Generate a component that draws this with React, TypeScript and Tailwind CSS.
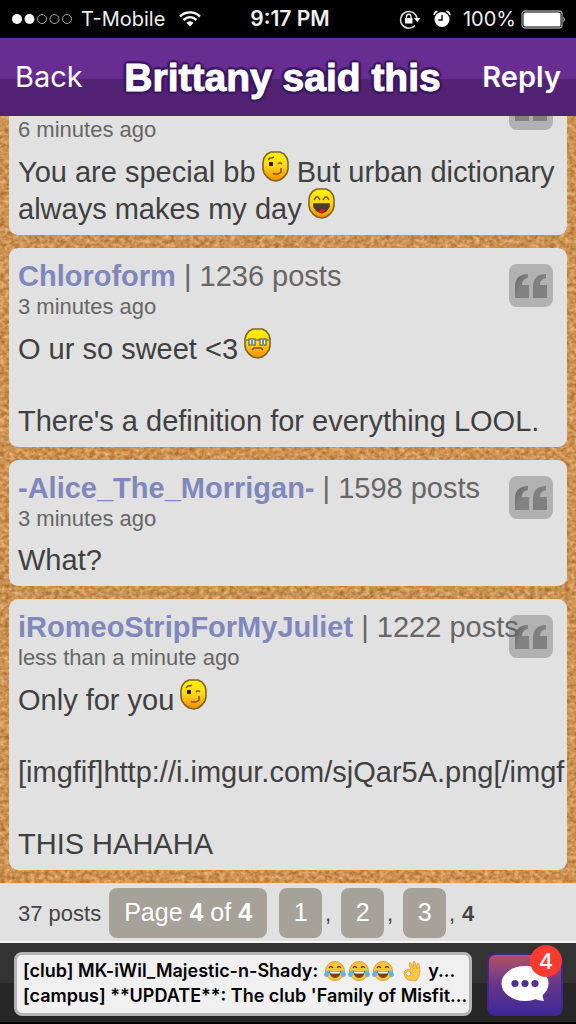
import type { ReactNode } from 'react'

type Mood = 'wink' | 'laugh' | 'glasses'

interface Post {
  id: number
  author?: string
  count?: number
  time: string
  lines: ReactNode[]
}

function Smiley({ mood }: { mood: Mood }) {
  return (
    <svg viewBox="0 0 27 31" role="img" aria-label={mood} className="inline-block align-baseline w-[27px] h-[31px] -mt-[2px] -ml-[2px]">
      <defs>
        <linearGradient id={`face-${mood}`} x1="0" y1="0" x2="0" y2="1">
          <stop offset="0" stopColor="#fff200" />
          <stop offset="0.45" stopColor="#ffd81a" />
          <stop offset="1" stopColor="#f98a00" />
        </linearGradient>
      </defs>
      <path
        d="M9 1H18L22 3L25 7L26 11V18L25 22L22 26L18 29L14 30L9 29L5 26L2 22L1 18V11L2 7L5 3Z"
        fill={`url(#face-${mood})`}
        stroke="#7d6726"
        strokeWidth="1.600"
        strokeLinejoin="round"
      />
      {mood === 'wink' && (
        <g fill="none" stroke="#7a5c10" strokeWidth="1.500">
          <path d="M6 9L8 7H10L12 6" />
          <rect x="7" y="11" width="4" height="4" fill="#2b2208" stroke="none" />
          <path d="M16 13L17 12H19L20 13" />
          <path d="M11 22L12 23H16L19 21V17" />
        </g>
      )}
      {mood === 'laugh' && (
        <g fill="none" stroke="#7a5c10" strokeWidth="1.500">
          <path d="M6 12L8 9H10L12 12M15 12L17 9H19L21 12" />
          <path d="M6 16H21V19L18 23L14 25L9 23L6 19Z" fill="#403d3b" stroke="#554015" />
          <path d="M11 23L13 21H15L17 23L15 25H12Z" fill="#e01414" stroke="none" />
        </g>
      )}
      {mood === 'glasses' && (
        <g fill="none" stroke="#7b7558" strokeWidth="1.500">
          <path d="M2 12H5M11 12H16M22 12H25" />
          <rect x="5" y="11" width="6" height="6" fill="#e9f5f4" />
          <rect x="16" y="11" width="6" height="6" fill="#e9f5f4" />
          <path d="M8 12V16M19 12V16" stroke="#5095b5" strokeWidth="2" />
          <path d="M8 22L10 20H17L19 22" stroke="#7a5310" />
        </g>
      )}
    </svg>
  )
}

const posts: Post[] = [
  {
    id: 1,
    time: '6 minutes ago',
    lines: [
      <>You are special bb <Smiley mood="wink" /> But urban dictionary</>,
      <>always makes my day <Smiley mood="laugh" /></>,
    ],
  },
  {
    id: 2,
    author: 'Chloroform',
    count: 1236,
    time: '3 minutes ago',
    lines: [<>O ur so sweet &lt;3 <Smiley mood="glasses" /></>, '', "There's a definition for everything LOOL."],
  },
  { id: 3, author: '-Alice_The_Morrigan-', count: 1598, time: '3 minutes ago', lines: ['What?'] },
  {
    id: 4,
    author: 'iRomeoStripForMyJuliet',
    count: 1222,
    time: 'less than a minute ago',
    lines: [
      <>Only for you <Smiley mood="wink" /></>,
      '',
      '[imgfif]http://i.imgur.com/sjQar5A.png[/imgf',
      '',
      'THIS HAHAHA',
    ],
  },
]

function StatusBar() {
  return (
    <div className="grid grid-cols-[1fr_auto_1fr] items-center h-[38px] shrink-0 px-3 bg-black text-[#f0f0f0] text-[20px] leading-6 font-[Inter,sans-serif]">
      <div className="flex items-center">
        <svg viewBox="0 0 62 12" className="w-[62px] h-3 mr-[7px]" aria-hidden="true">
          <circle cx="5" cy="6" r="5" fill="#fff" />
          <circle cx="17.500" cy="6" r="5" fill="#fff" />
          <g fill="none" stroke="#aaa">
            <circle cx="30" cy="6" r="4.500" />
            <circle cx="42.500" cy="6" r="4.500" />
            <circle cx="55" cy="6" r="4.500" />
          </g>
        </svg>
        T-Mobile
        <svg viewBox="0 0 22 16" className="w-[22px] h-4 ml-[14px]" aria-hidden="true">
          <path d="M1 5.500C6.500 0 15.500 0 21 5.500" fill="none" stroke="#fff" strokeWidth="2.400" />
          <path d="M4.500 9C8.500 5.300 13.500 5.300 17.500 9" fill="none" stroke="#fff" strokeWidth="2.400" />
          <path d="M7.500 11.800Q11 8.800 14.500 11.800L11 15.500Z" fill="#fff" />
        </svg>
      </div>
      <div className="font-semibold text-[21px] pl-1">9:17 PM</div>
      <div className="flex items-center justify-end">
        <svg viewBox="0 0 22 20" className="w-[22px] h-5 mr-3" aria-hidden="true">
          <path d="M16 16.500A8.300 8.300 0 1 1 18 9" fill="none" stroke="#ddd" strokeWidth="1.500" />
          <path d="M15 9H21.500L18.200 13Z" fill="#fff" />
          <rect x="6" y="9" width="7.500" height="5.500" fill="#fff" />
          <path d="M7.500 9V7.500A2 2 0 0 1 12 7.500V9" fill="none" stroke="#fff" strokeWidth="1.300" />
        </svg>
        <svg viewBox="0 0 18 18" className="w-[18px] h-[18px] mr-3" aria-hidden="true">
          <circle cx="9" cy="9.500" r="7.500" fill="#fff" />
          <path d="M1 5Q1.500 2 4.500 1.200M17 5Q16.500 2 13.500 1.200" fill="none" stroke="#fff" strokeWidth="1.500" />
          <path d="M9 5V10H5.500" fill="none" stroke="#000" strokeWidth="1.400" />
        </svg>
        100%
        <svg viewBox="0 0 45 19" className="w-[45px] h-[19px] ml-[5px] -mr-[2px]" aria-hidden="true">
          <rect x="1" y="1" width="40" height="17" rx="3" fill="none" stroke="#999" strokeWidth="1.300" />
          <rect x="2.500" y="2.500" width="37" height="14" rx="1.500" fill="#fff" />
          <path d="M42.500 6.500Q45 9.500 42.500 12.500Z" fill="#ddd" />
        </svg>
      </div>
    </div>
  )
}

function CorkBoard() {
  return (
    <svg className="absolute inset-0 w-full h-full" aria-hidden="true">
      <filter id="cork" x="0" y="0" width="100%" height="100%" colorInterpolationFilters="sRGB">
        <feTurbulence type="fractalNoise" baseFrequency="0.2 0.25" numOctaves="3" seed="8" />
        <feColorMatrix values="0.36 0 0 0 0.62  0.44 0 0 0 0.35  0.46 0.05 0 0 0.07  0 0 0 0 1" />
      </filter>
      <rect width="100%" height="100%" filter="url(#cork)" />
    </svg>
  )
}

function PostCard({ post }: { post: Post }) {
  return (
    <article className="relative shrink-0 rounded-[9px] bg-[#e1e1e1] px-[9px] pt-[11px] pb-2">
      <button
        aria-label="Quote"
        className="absolute top-4 right-[14px] w-11 h-[43px] rounded-lg bg-[#b1b1b1] flex items-center justify-center"
      >
        <svg viewBox="0 0 34 26" className="w-[34px] h-[26px]" aria-hidden="true">
          <defs>
            <linearGradient id="quote" x1="0" y1="0" x2="1" y2="1">
              <stop offset="0" stopColor="#606060" />
              <stop offset="0.500" stopColor="#828282" />
            </linearGradient>
          </defs>
          <path d="M1 25V14C1 6 5 1 14 1V5C10 6 8 8 8 12H15V25Z" fill="url(#quote)" />
          <path d="M19 25V14C19 6 23 1 32 1V5C28 6 26 8 26 12H33V25Z" fill="#808080" />
        </svg>
      </button>
      <h2 className="relative h-[35px] text-[29px] leading-[34px] text-[#666] whitespace-nowrap pointer-events-none">
        {post.author && (
          <>
            <a href="#profile" className="font-bold text-[#8088bb] pointer-events-auto">{post.author}</a> | {post.count} posts
          </>
        )}
      </h2>
      <p className="text-[22px] leading-[26px] text-[#666]">{post.time}</p>
      <div className="mt-[10px] text-[29px] leading-9 text-[#404040] whitespace-nowrap">
        {post.lines.map((line, i) => (
          <p key={i} className="min-h-9">{line}</p>
        ))}
      </div>
    </article>
  )
}

function JoyFace() {
  return (
    <svg viewBox="0 0 22 22" role="img" aria-label="joy" className="w-[22px] h-[22px] shrink-0 mr-[2px]">
      <circle cx="11" cy="11" r="9.500" fill="#fcc63c" stroke="#e59c27" />
      <path d="M5 8Q7 5 9 8M13 8Q15 5 17 8" fill="none" stroke="#6b3d13" strokeWidth="1.300" />
      <path d="M5 11H17Q16 18 11 18T5 11Z" fill="#78401b" />
      <path d="M6 11.500H16L15.500 13.500H6.500Z" fill="#fff" />
      <path d="M5.500 10Q0 11 0 15Q1 18 4 16.500Q6 14 5.500 10ZM16.500 10Q22 11 22 15Q21 18 18 16.500Q16 14 16.500 10Z" fill="#58b8ec" />
    </svg>
  )
}

function OkHand() {
  return (
    <svg viewBox="0 0 20 22" role="img" aria-label="ok hand" className="w-5 h-[22px] shrink-0 ml-[6px] mr-[6px]">
      <path
        d="M6 20Q3 18 2 14Q2 10 6 9L9 10L7 4Q7 2 9 3L12 9L11 2Q12 0 13 2L15 9L15 4Q17 2 17 4L18 11Q18 17 14 21Z"
        fill="#fcc54c"
        stroke="#e6a12d"
        strokeWidth="0.800"
      />
      <circle cx="6.500" cy="13.500" r="2.500" fill="#f0f0f0" stroke="#e6a12d" />
    </svg>
  )
}

function Pager() {
  return (
    <nav aria-label="Pages" className="flex items-center h-[60px] shrink-0 pl-[18px] pt-[2px] bg-[#e1e1e1] border-b-2 border-[#f4f4f4] text-[22px] text-[#444]">
      <span>37 posts</span>
      <button className="h-[50px] ml-2 px-[15px] rounded-lg bg-[#a6a199] text-white text-[25px]">
        Page <b>4</b> of <b>4</b>
      </button>
      {[1, 2, 3].map((n) => (
        <span key={n} className="flex items-center">
          <button className="w-[43px] h-[50px] ml-3 rounded-lg bg-[#a6a199] text-white text-[25px]">{n}</button>
          <span className="w-1 ml-[3px]">,</span>
        </span>
      ))}
      <b className="ml-[9px]">4</b>
    </nav>
  )
}

function ChatBar() {
  return (
    <footer className="flex items-center gap-[15px] h-[81px] shrink-0 pl-[14px] pr-[13px] pt-[3px] bg-linear-to-b from-[#333] from-50% to-[#272727] to-50% border-b-2 border-black">
      <div className="flex-1 min-w-0 h-16 px-[6px] pt-[3px] rounded-lg border-[3px] border-[#b4b4b4] bg-[#f0f0f0] text-black font-[Inter,sans-serif] font-semibold text-[18px] leading-[25px] whitespace-nowrap">
        <div className="flex items-center">
          <span className="mr-[6px]">[club] MK-iWil_Majestic-n-Shady:</span>
          <JoyFace />
          <JoyFace />
          <JoyFace />
          <OkHand />
          <span>y...</span>
        </div>
        <div>[campus] **UPDATE**: The club 'Family of Misfit...</div>
      </div>
      <button
        aria-label="Chat, 4 new"
        className="relative w-[76px] h-[63px] shrink-0 rounded-lg border-2 border-[#44258a] bg-linear-to-b from-[#b74d61] via-[#65358a] to-[#3d2897] flex items-center justify-center"
      >
        <svg viewBox="0 0 48 36" className="w-12 h-9" aria-hidden="true">
          <ellipse cx="24" cy="17.500" rx="23.500" ry="17.500" fill="#fff" />
          <path d="M32 32Q37 35 43 35Q41 31 42 26Z" fill="#fff" />
          <g fill="#53328d">
            <circle cx="14" cy="17.500" r="3.600" />
            <circle cx="24" cy="17.500" r="3.600" />
            <circle cx="34" cy="17.500" r="3.600" />
          </g>
        </svg>
        <span className="absolute -top-[10px] -right-[1px] w-8 h-8 rounded-full bg-[#fc3a30] text-white text-[22px] leading-8 font-medium font-[Inter,sans-serif] text-center">
          4
        </span>
      </button>
    </footer>
  )
}

export default function App() {
  return (
    <div className="flex flex-col h-screen overflow-hidden font-['Liberation_Sans',Arial,sans-serif]">
      <StatusBar />
      <header className="flex items-center justify-between h-[78px] shrink-0 px-[15px] bg-linear-to-b from-[#682d91] from-52% to-[#522372] to-52% text-white">
        <button className="pb-[1px] text-[29px] font-[Inter,sans-serif]">Back</button>
        <h1 className="pt-[1px] text-[39px] leading-none font-bold whitespace-nowrap [-webkit-text-stroke:1px_white] [text-shadow:3px_0_1px_#3b1660,-3px_0_1px_#3b1660,0_3px_1px_#3b1660,0_-3px_1px_#3b1660,2px_2px_1px_#3b1660,-2px_-2px_1px_#3b1660,2px_-2px_1px_#3b1660,-2px_2px_1px_#3b1660]">
          Brittany said this
        </h1>
        <button className="pb-[1px] text-[29px] font-semibold font-[Inter,sans-serif]">Reply</button>
      </header>
      <main className="relative flex-1 min-h-0 overflow-hidden bg-[#cc8d4b]">
        <CorkBoard />
        <div className="relative h-full flex flex-col justify-end gap-[13px] px-[9px] pb-[13px]">
          {posts.map((post) => (
            <PostCard key={post.id} post={post} />
          ))}
        </div>
      </main>
      <Pager />
      <ChatBar />
    </div>
  )
}
